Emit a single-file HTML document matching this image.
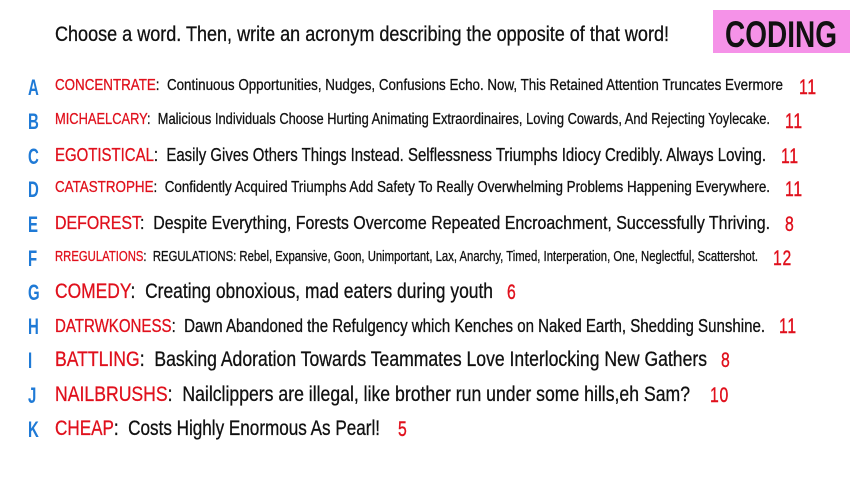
<!DOCTYPE html>
<html><head><meta charset="utf-8">
<style>
html,body{margin:0;padding:0;width:853px;height:480px;background:#fff;overflow:hidden;font-family:"Liberation Sans",sans-serif;}
.t{position:absolute;white-space:nowrap;transform-origin:0 50%;color:#111;line-height:1;-webkit-text-stroke:0.3px #111;}
.r{color:#e0101c;-webkit-text-stroke:0.3px #e0101c;}
.l{position:absolute;color:#1f7ad6;font-size:22px;font-weight:bold;line-height:1;transform-origin:0 50%;transform:scaleX(0.68);}
.n{position:absolute;color:#e0101c;font-size:21px;line-height:1;transform-origin:0 50%;transform:scaleX(0.75);letter-spacing:1px;-webkit-text-stroke:0.4px #e0101c;}
#box{position:absolute;left:713px;top:10px;width:137px;height:43px;background:#f592e8;}
#box span{position:absolute;left:12px;top:4px;font-size:37px;font-weight:bold;color:#111;transform-origin:0 0;white-space:nowrap;}
</style></head><body>
<div id="box"><span id="cod">CODING</span></div>
<div class="t" id="title" style="left:55px;top:24px;font-size:21px;">Choose a word. Then, write an acronym describing the opposite of that word!</div>

<div class="l" style="left:28px;top:77px">A</div>
<div class="t" id="rA" style="left:55px;top:78px;font-size:16px"><span class="r">CONCENTRATE</span>:&nbsp; Continuous Opportunities, Nudges, Confusions Echo. Now, This Retained Attention Truncates Evermore</div>
<div class="n" style="left:799px;top:77px">11</div>

<div class="l" style="left:28px;top:111px">B</div>
<div class="t" id="rB" style="left:55px;top:112px;font-size:16px"><span class="r">MICHAELCARY</span>:&nbsp; Malicious Individuals Choose Hurting Animating Extraordinaires, Loving Cowards, And Rejecting Yoylecake.</div>
<div class="n" style="left:785px;top:111px">11</div>

<div class="l" style="left:28px;top:146px">C</div>
<div class="t" id="rC" style="left:55px;top:146px;font-size:18px"><span class="r">EGOTISTICAL</span>:&nbsp; Easily Gives Others Things Instead. Selflessness Triumphs Idiocy Credibly. Always Loving.</div>
<div class="n" style="left:781px;top:146px">11</div>

<div class="l" style="left:28px;top:179px">D</div>
<div class="t" id="rD" style="left:55px;top:180px;font-size:16px"><span class="r">CATASTROPHE</span>:&nbsp; Confidently Acquired Triumphs Add Safety To Really Overwhelming Problems Happening Everywhere.</div>
<div class="n" style="left:785px;top:179px">11</div>

<div class="l" style="left:28px;top:214px">E</div>
<div class="t" id="rE" style="left:55px;top:214px;font-size:18px"><span class="r">DEFOREST</span>:&nbsp; Despite Everything, Forests Overcome Repeated Encroachment, Successfully Thriving.</div>
<div class="n" style="left:785px;top:214px">8</div>

<div class="l" style="left:28px;top:248px">F</div>
<div class="t" id="rF" style="left:55px;top:249px;font-size:15px"><span class="r">RREGULATIONS</span>:&nbsp; REGULATIONS: Rebel, Expansive, Goon, Unimportant, Lax, Anarchy, Timed, Interperation, One, Neglectful, Scattershot.</div>
<div class="n" style="left:773px;top:248px">12</div>

<div class="l" style="left:28px;top:282px">G</div>
<div class="t" id="rG" style="left:55px;top:281px;font-size:21px"><span class="r">COMEDY</span>:&nbsp; Creating obnoxious, mad eaters during youth</div>
<div class="n" style="left:507px;top:282px">6</div>

<div class="l" style="left:28px;top:316px">H</div>
<div class="t" id="rH" style="left:55px;top:317px;font-size:18px"><span class="r">DATRWKONESS</span>:&nbsp; Dawn Abandoned the Refulgency which Kenches on Naked Earth, Shedding Sunshine.</div>
<div class="n" style="left:779px;top:316px">11</div>

<div class="l" style="left:28px;top:350px">I</div>
<div class="t" id="rI" style="left:55px;top:349px;font-size:21px"><span class="r">BATTLING</span>:&nbsp; Basking Adoration Towards Teammates Love Interlocking New Gathers</div>
<div class="n" style="left:721px;top:350px">8</div>

<div class="l" style="left:28px;top:385px">J</div>
<div class="t" id="rJ" style="left:55px;top:384px;font-size:21px"><span class="r">NAILBRUSHS</span>:&nbsp; Nailclippers are illegal, like brother run under some hills,eh Sam?</div>
<div class="n" style="left:710px;top:385px">10</div>

<div class="l" style="left:28px;top:419px">K</div>
<div class="t" id="rK" style="left:55px;top:418px;font-size:21px"><span class="r">CHEAP</span>:&nbsp; Costs Highly Enormous As Pearl!</div>
<div class="n" style="left:398px;top:419px">5</div>

<script>
var W={title:614,rA:728,rB:715,rC:711,rD:715,rE:715,rF:703,rG:438,rH:710,rI:652,rJ:635,rK:325};
for(var k in W){var e=document.getElementById(k);var w=e.getBoundingClientRect().width;e.style.transform='scaleX('+(W[k]/w)+')';}
var c=document.getElementById('cod');c.style.transform='scaleX('+(112/c.getBoundingClientRect().width)+')';
</script>
</body></html>
